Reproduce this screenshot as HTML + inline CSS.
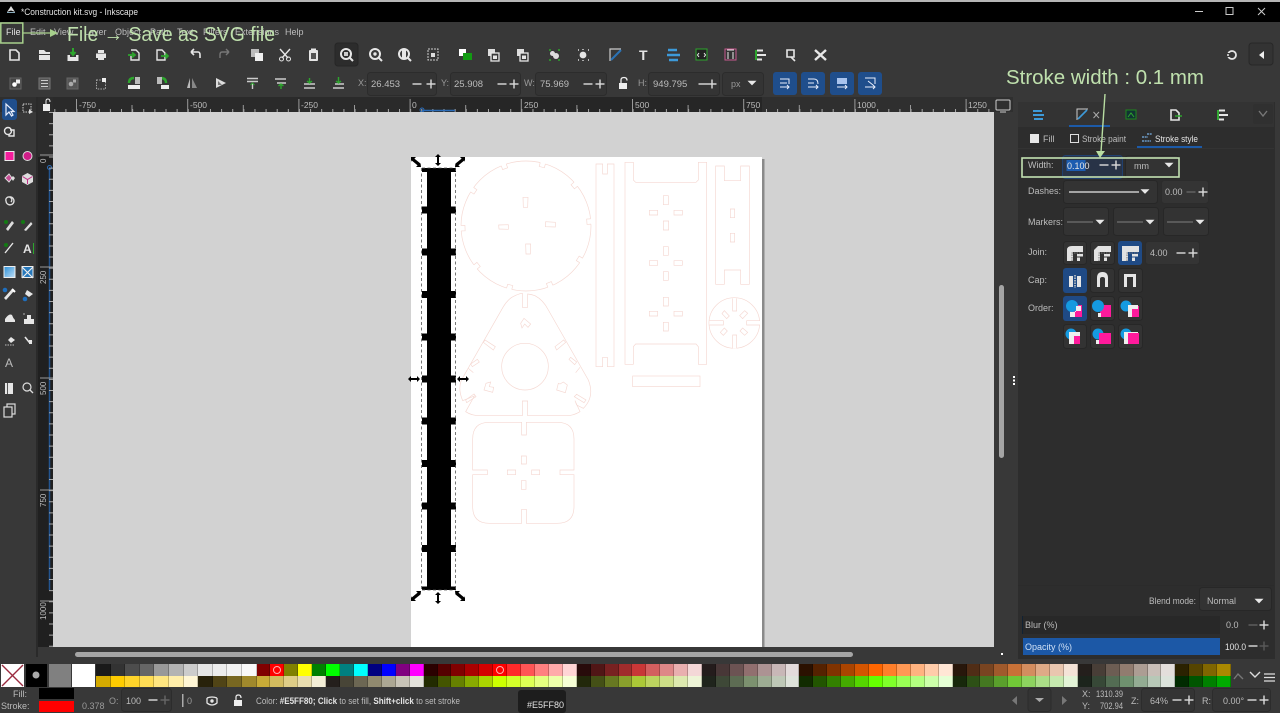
<!DOCTYPE html>
<html><head><meta charset="utf-8"><title>Inkscape</title>
<style>
html,body{margin:0;padding:0;background:#383838;width:1280px;height:713px;overflow:hidden}
svg{position:absolute;left:0;top:0;display:block}
text{font-family:"Liberation Sans",sans-serif;font-size:9px;fill:#bcbcbc}
.w{fill:#e4e4e4}.d{fill:#9a9a9a}
.fld{fill:#343434;stroke:#2c2c2c}
.btn{fill:#333;stroke:#272727}
.ic{fill:none;stroke:#e6e6e6;stroke-width:1.4}
.cut{fill:none;stroke:#f5d8d2;stroke-width:2}
.ann{font-family:"Liberation Sans",sans-serif;fill:#bfe0ad;font-size:20px}
#pal{position:absolute;left:96px;top:664px;width:1140px}
.row{display:flex;height:11.7px;margin-bottom:.2px}
.row i{display:block;flex:0 0 13.93px;height:11.5px;box-shadow:inset -1px 0 rgba(0,0,0,.22)}
.row i.g{flex:0 0 14.6px}
</style></head><body>
<svg width="1280" height="713" viewBox="0 0 1280 713" xmlns="http://www.w3.org/2000/svg">
<defs>
<g id="m"><rect x="-4.5" y="-.7" width="9" height="1.4" fill="#dcdcdc"/></g>
<g id="p"><rect x="-4.5" y="-.7" width="9" height="1.4" fill="#dcdcdc"/><rect x="-.7" y="-4.5" width="1.4" height="9" fill="#dcdcdc"/></g>
<path id="tri" d="M-4.5-2.2H4.5L0 2.4Z" fill="#e8e8e8"/>
<path id="hh" d="M-6 0L-3-3V-1H3V-3L6 0L3 3V1H-3V3Z" fill="#000"/>
<path id="hv" d="M0-6L3-3H1V3H3L0 6L-3 3H-1V-3H-3Z" fill="#000"/>
<path id="hd" d="M-5-5H0L-1.6-3.4L4.6 1.6L5 5H0L1.6 3.4L-4.4-1.6L-5 0Z" fill="#000"/>
<g id="mag"><circle cx="-1" cy="-1" r="5" fill="none" stroke="#e6e6e6" stroke-width="2"/><path d="M2.5 2.5L6 6" stroke="#e6e6e6" stroke-width="2"/></g>
<g id="jin"><path d="M-3 8V0H8" fill="none" stroke="#777" stroke-width="1" stroke-dasharray="1.5 1"/><rect x="2" y="1" width="6" height="2.5" fill="#e2e2e2"/><rect x="2" y="4.5" width="3" height="3.5" fill="#e2e2e2"/></g>
<g id="n"><path d="M370 28H386V42H370Z" fill="#fff" stroke="none"/><path class="cut" d="M370 33V45H386V33"/></g>
</defs>

<!-- chrome -->
<rect width="1280" height="713" fill="#383838"/>
<rect width="1280" height="2" fill="#b5b5b5"/>
<rect y="2" width="1280" height="20" fill="#000"/>
<path d="M7 12L11 6L15 12L11 10.5Z" fill="#ddd"/><rect x="7" y="12" width="8" height="1" fill="#8ab"/>
<text x="21" y="15" class="w" textLength="117" lengthAdjust="spacingAndGlyphs">*Construction kit.svg - Inkscape</text>
<rect x="1195" y="11" width="8" height="1" fill="#ccc"/>
<rect x="1226" y="7.5" width="7" height="7" fill="none" stroke="#ccc"/>
<path d="M1258 8L1265 15M1265 8L1258 15" stroke="#ccc"/>

<!-- menu -->
<text x="6" y="35" class="w">File</text>
<text x="30" y="35">Edit</text><text x="54" y="35">View</text><text x="84" y="35">Layer</text><text x="115" y="35">Object</text><text x="150" y="35">Path</text><text x="177" y="35">Text</text><text x="203" y="35">Filters</text><text x="235" y="35">Extensions</text><text x="285" y="35">Help</text>

<!-- toolbar 1 -->
<g class="ic">
<path d="M10 50H16L19 53V60H10Z" stroke-width="1.6"/>
<path d="M39 50H44L46 52H50V60H39Z" fill="#e6e6e6" stroke="none"/><rect x="39" y="54" width="11" height="1" fill="#383838" stroke="none"/>
<path d="M73 48V54M70.5 52L73 55L75.5 52" stroke="#2da62d" stroke-width="2"/><path d="M67.5 55H70V57H76V55H78.5V61H67.5Z" fill="#e6e6e6" stroke="none"/>
<path d="M98 50H104V53H98ZM96 53.5H106V58H104V60H98V58H96Z" fill="#e6e6e6" stroke="none"/>
<path d="M131 50H136L139 53V60H131V56" /><path d="M128 55H134M132 52.5L135 55L132 57.5" stroke="#2da62d" stroke-width="1.7"/>
<path d="M157 60V50H162L165 53V60Z"/><path d="M161 56H168M165.5 53.5L168 56L165.5 58.5" stroke="#2da62d" stroke-width="1.7"/>
<path d="M191 52H198Q200 52 200 55V58M191 52L194 49M191 52L194 55" stroke-width="1.6"/>
<path d="M229 52H222Q220 52 220 55V58M229 52L226 49M229 52L226 55" stroke="#777" stroke-width="1.4"/>
</g>
<rect x="251" y="49" width="8" height="8" fill="#bbb"/><rect x="255" y="53" width="8" height="8" fill="#efefef"/>
<path d="M280 49L288 58M290 49L282 58" stroke="#e6e6e6" stroke-width="1.4"/><circle cx="281.5" cy="59" r="2" fill="none" stroke="#e6e6e6"/><circle cx="288.5" cy="59" r="2" fill="none" stroke="#e6e6e6"/>
<rect x="309" y="50" width="9" height="11" fill="#e6e6e6" rx="1"/><rect x="311" y="48.5" width="5" height="3" fill="#e6e6e6"/><rect x="311" y="53" width="5" height="6" fill="#555"/>
<rect x="335" y="43" width="23" height="23" rx="3" fill="#2c2c2c" stroke="#262626"/>
<use href="#mag" x="347" y="55"/><rect x="344" y="52" width="4" height="4" fill="#ccc"/>
<use href="#mag" x="376" y="55"/><circle cx="375" cy="54" r="1.7" fill="#e6e6e6"/>
<use href="#mag" x="405" y="55"/><rect x="402" y="50" width="4" height="8" fill="#e6e6e6"/>
<rect x="428" y="49" width="10" height="11" fill="none" stroke="#ccc" stroke-dasharray="2 1"/><rect x="431" y="53" width="4" height="4" fill="#ddd"/>
<rect x="459" y="49" width="7" height="7" fill="#fff"/><rect x="463" y="53" width="9" height="7" fill="#129a12"/>
<rect x="488" y="49" width="7" height="7" fill="#ddd"/><rect x="491" y="53" width="8" height="8" fill="#383838" stroke="#e6e6e6" stroke-width="1.3"/><rect x="493" y="55.5" width="4" height="3.5" fill="#e6e6e6"/>
<rect x="517" y="49" width="7" height="7" fill="#ddd"/><rect x="520" y="53" width="8" height="8" fill="#383838" stroke="#e6e6e6" stroke-width="1.3"/><rect x="522" y="55.5" width="4" height="3.5" fill="#e6e6e6"/>
<rect x="550" y="51" width="5" height="5" rx="2.5" fill="#ddd"/><circle cx="556" cy="56" r="3" fill="#ddd"/><path d="M549 50h2M558 50h2M549 60h2M558 60h2" stroke="#2da62d" stroke-width="1.5"/>
<circle cx="583" cy="55" r="3.4" fill="#e6e6e6"/><path d="M578 50h1M588 50h1M578 60h1M588 60h1M583 49v1M583 60v1" stroke="#ddd" stroke-width="1.4"/>
<path d="M610 61V49H621" fill="none" stroke="#ccc" stroke-width="1.2"/><path d="M611 60L621 50" stroke="#2b73b5" stroke-width="2"/>
<text x="639" y="60" style="font-size:14px;font-weight:bold" class="w">T</text>
<path d="M668 50H677M667 55H680M669 60H678" stroke="#3d9ad9" stroke-width="2.4"/>
<rect x="696" y="49" width="11" height="11" fill="#222" stroke="#2da62d"/><path d="M699 53L697.5 55L699 57M704 53L705.5 55L704 57" stroke="#eee" fill="none"/>
<rect x="725" y="49" width="11" height="11" fill="#333" stroke="#c85a90"/><path d="M727 50h7M728 52v7M733 52v7" stroke="#eee" fill="none"/>
<rect x="755" y="50" width="2" height="10" fill="#2da62d"/><path d="M757 50.5h6M757 55h9M757 59.5h5" stroke="#e6e6e6" stroke-width="2"/>
<path d="M787 50H794V57H787Z" fill="none" stroke="#e6e6e6" stroke-width="1.6"/><path d="M791 57L795 61" stroke="#e6e6e6" stroke-width="1.6"/>
<path d="M815 50L826 60M826 50L815 60" stroke="#e6e6e6" stroke-width="2.4"/>
<circle cx="1232" cy="55" r="4" fill="none" stroke="#e6e6e6" stroke-width="1.8"/><rect x="1226" y="53" width="4" height="4" fill="#383838"/><circle cx="1228" cy="55" r="1" fill="#e6e6e6"/>
<rect x="1249" y="43" width="24" height="22" rx="3" fill="#333" stroke="#272727"/><path d="M1264 51V59L1259 55Z" fill="#eee"/>

<!-- toolbar 2 -->
<rect x="10" y="78" width="11" height="11" fill="#444" stroke="#666"/><circle cx="14.5" cy="84.5" r="2.3" fill="#fff"/><rect x="16" y="79.5" width="4" height="4" fill="#eee"/>
<rect x="39" y="78" width="11" height="11" fill="#555" stroke="#777"/><path d="M41 80.5h7M41 83.5h7M41 86.5h7" stroke="#ccc"/>
<rect x="67" y="78" width="11" height="11" fill="#555" stroke="#666"/><circle cx="71" cy="84" r="2.3" fill="#aaa"/><rect x="73" y="79.5" width="3" height="3" fill="#aaa"/>
<rect x="96.5" y="80" width="9" height="9" fill="none" stroke="#aaa" stroke-dasharray="1.5 1.2"/><rect x="102" y="78" width="4" height="4" fill="#eee"/>
<path d="M129 83Q129 78 134 78" fill="none" stroke="#2da62d" stroke-width="2.4"/><rect x="135" y="77" width="5" height="7" fill="#bbb"/><rect x="128" y="85" width="12" height="4" fill="#eee"/>
<path d="M166 83Q166 78 161 78" fill="none" stroke="#2da62d" stroke-width="2.4"/><rect x="157" y="77" width="5" height="7" fill="#bbb"/><rect x="161" y="85" width="8" height="4" fill="#eee"/>
<path d="M187 88H190V78Z" fill="#bbb"/><path d="M192 78V88H197Z" fill="#888"/>
<path d="M216 78V88L226 83Z" fill="#ddd"/><path d="M218 81V85H222Z" fill="#777"/>
<path d="M247 78.5h11M247 81.5h11M252.5 83v6" stroke="#ccc" stroke-width="1.4"/><path d="M250.5 85L252.5 83L254.5 85" stroke="#2da62d" fill="none"/>
<path d="M275 79h11M277 83h9" stroke="#ccc" stroke-width="1.4"/><path d="M281 89V84M278.5 86L281 84L283.5 86" stroke="#2da62d" fill="none" stroke-width="1.4"/>
<path d="M304 84h11M304 88h11" stroke="#ccc" stroke-width="1.4"/><path d="M309.5 78V83M307 81L309.5 83L312 81" stroke="#2da62d" fill="none" stroke-width="1.4"/>
<path d="M333 88h11M335 84h9" stroke="#ccc" stroke-width="1.4"/><path d="M338.5 77V83M336 81L338.5 83L341 81" stroke="#2da62d" fill="none" stroke-width="1.4"/>

<text x="358" y="86" class="d">X:</text><rect x="367.5" y="72.5" width="69" height="23" rx="3" class="fld"/><text x="371" y="87" style="font-size:9.5px" fill="#bbb">26.453</text><use href="#m" x="417" y="84"/><use href="#p" x="431" y="84"/>
<text x="441" y="86" class="d">Y:</text><rect x="450.5" y="72.5" width="70" height="23" rx="3" class="fld"/><text x="454" y="87" style="font-size:9.5px">25.908</text><use href="#m" x="502" y="84"/><use href="#p" x="514" y="84"/>
<text x="524" y="86" class="d">W:</text><rect x="535.5" y="72.5" width="71" height="23" rx="3" class="fld"/><text x="540" y="87" style="font-size:9.5px">75.969</text><use href="#m" x="588" y="84"/><use href="#p" x="600" y="84"/>
<rect x="619" y="83" width="8" height="6" fill="#eee"/><path d="M621 83V80Q621 77.500 624 77.500Q627 77.500 627 80.500" fill="none" stroke="#eee" stroke-width="1.300"/>
<text x="638" y="86" class="d">H:</text><rect x="648.5" y="72.5" width="71" height="23" rx="3" class="fld"/><text x="653" y="87" style="font-size:9.5px">949.795</text><use href="#m" x="703" y="84"/><use href="#p" x="712" y="84"/>
<rect x="722.5" y="72.5" width="41" height="23" rx="3" class="fld"/><text x="731" y="87" class="d">px</text><use href="#tri" x="752" y="83"/>
<g fill="#1f4e8c"><rect x="773" y="72" width="24" height="23" rx="3"/><rect x="801" y="72" width="24" height="23" rx="3"/><rect x="830" y="72" width="24" height="23" rx="3"/><rect x="858" y="72" width="24" height="23" rx="3"/></g>
<path d="M780 79h9v5M780 83h7M780 87h9M787 85l2 2-2 2" stroke="#e8eefc" fill="none"/>
<path d="M808 79h6q4 0 4 5M808 83h6M808 87h10M816 85l2 2-2 2" stroke="#e8eefc" fill="none"/>
<rect x="837" y="78" width="10" height="6" fill="#a9c4ee"/><path d="M837 87h10M845 85l2 2-2 2" stroke="#e8eefc" fill="none"/>
<path d="M865 78h10v6M868 81l5 4M865 87h10M873 85l2 2-2 2" stroke="#e8eefc" fill="none"/>

<!-- rulers -->
<rect x="0" y="97" width="1013" height="15" fill="#2f2f2f"/>
<rect x="53" y="97" width="360" height="15" fill="#2a2a2a"/><rect x="411" y="97" width="351" height="15" fill="#262626"/>
<rect x="36" y="97" width="17" height="550" fill="#2c2c2c"/><rect x="38" y="157" width="15" height="490" fill="#202020"/>
<line x1="53" x2="994" y1="110.5" y2="110.5" stroke="#a8a8a8" stroke-width="3" stroke-dasharray="1 10.12" stroke-dashoffset="-1.3"/>
<g stroke="#9a9a9a"><path d="M76.5 99V112M187.7 99V112M298.9 99V112M410.1 99V112M521.3 99V112M632.5 99V112M743.7 99V112M854.9 99V112M966.1 99V112"/><path d="M132 105V112M243.3 105V112M354.5 105V112M465.7 105V112M576.9 105V112M688.1 105V112M799.3 105V112M910.5 105V112"/></g>
<g><text x="79" y="108" style="font-size:8.5px">-750</text><text x="190" y="108" style="font-size:8.5px">-500</text><text x="301" y="108" style="font-size:8.5px">-250</text><text x="412" y="108" style="font-size:8.5px">0</text><text x="524" y="108" style="font-size:8.5px">250</text><text x="635" y="108" style="font-size:8.5px">500</text><text x="746" y="108" style="font-size:8.5px">750</text><text x="857" y="108" style="font-size:8.5px">1000</text><text x="968" y="108" style="font-size:8.5px">1250</text></g>
<path d="M422 110.5H455" stroke="#2b6cb8" stroke-width="1.5"/><circle cx="422" cy="110" r="2" fill="none" stroke="#2b6cb8"/>
<path d="M49.5 168V590" stroke="#23548f" stroke-width="1.5"/><circle cx="49.5" cy="167.500" r="2" fill="none" stroke="#2b6cb8"/>
<line x1="51" x2="51" y1="112" y2="647" stroke="#a8a8a8" stroke-width="4" stroke-dasharray="1 10.12"/>
<g stroke="#9a9a9a"><path d="M40 155H53M40 267H53M40 378H53M40 490H53M40 601H53"/></g>
<text transform="translate(46,284) rotate(-90)" style="font-size:8px">250</text><text transform="translate(46,395) rotate(-90)" style="font-size:8px">500</text><text transform="translate(46,507) rotate(-90)" style="font-size:8px">750</text><text transform="translate(46,620) rotate(-90)" style="font-size:8px">1000</text><text transform="translate(46,163) rotate(-90)" style="font-size:8px">0</text>
<rect x="43" y="104" width="7" height="7" fill="#eee"/><path d="M46 104V101Q46 99 48 99Q50 99 50 102" fill="none" stroke="#eee"/>

<!-- left toolbar -->
<rect x="2" y="99" width="15" height="21" rx="3" fill="#1f4e8c"/>
<path d="M6 104V115L9 112L11.5 116L13 115L11 111.500H14Z" fill="none" stroke="#e8eefc" stroke-width="1.2"/>
<rect x="23" y="104" width="8" height="8" fill="none" stroke="#ccc" stroke-dasharray="1.5 1"/><path d="M29 109L33 112L29 114Z" fill="#ddd"/>
<circle cx="8" cy="131" r="3.5" fill="none" stroke="#e6e6e6" stroke-width="1.4"/><path d="M10 130H14V136H9V134" fill="none" stroke="#e6e6e6" stroke-width="1.4"/>
<rect x="5" y="151.500" width="9" height="9" fill="#f51d9c" stroke="#eee"/>
<circle cx="27.500" cy="156" r="4.500" fill="#d01e88" stroke="#ddd"/>
<path d="M5 178L9 174L12 178L9 182Z" fill="#c64d94" stroke="#ddd"/><path d="M11 178l2-2 2 2-2 3Z" fill="#ddd"/>
<path d="M27.500 173L33 176V182L27.500 185L22 182V176Z" fill="#ddd"/><path d="M22.500 176.500L27.500 179.500L32.500 176.500M27.500 179.500V184" stroke="#c02d85" fill="none"/>
<path d="M9 197a4 4 0 1 1-3 4a3 3 0 1 1 5 1" fill="none" stroke="#ddd" stroke-width="1.4"/>
<circle cx="6" cy="222" r="2" fill="#137a13"/><path d="M6 229L12 221L14 223L8 231Z" fill="#ddd"/><circle cx="23" cy="222" r="2" fill="#137a13"/><path d="M24 230L31 222L32.500 224L26 231Z" fill="#ddd"/>
<path d="M5 253L13 243" stroke="#e6e6e6" stroke-width="1.4"/><circle cx="6" cy="245" r="2" fill="#137a13"/>
<text x="23" y="253" style="font-size:12px;font-weight:bold" class="w">A</text><rect x="33" y="243" width="1" height="11" fill="#2da62d"/>
<defs><linearGradient id="gg" x1="0" y1="0" x2="1" y2="1"><stop offset="0" stop-color="#2b8fd6"/><stop offset="1" stop-color="#c0e0f8"/></linearGradient></defs>
<rect x="4" y="266.500" width="11" height="11" fill="url(#gg)" stroke="#eee"/>
<rect x="22" y="266.500" width="11" height="11" fill="#2678bb" stroke="#eee"/><path d="M22 267L33 278M33 267L22 278" stroke="#eee" stroke-width="1.2"/>
<circle cx="5" cy="290" r="2.300" fill="#1f6fbe"/><path d="M6 300L14 291L12 289L4 298Z" fill="#e6e6e6"/><path d="M12 289L15 292" stroke="#fff" stroke-width="2"/>
<circle cx="25" cy="299" r="2.300" fill="#1f6fbe"/><path d="M27 290L33 294L29 297L25 294Z" fill="#e6e6e6"/>
<path d="M5 322V319Q9 313 12 315Q13 318 15 320V322Z" fill="#e6e6e6"/>
<rect x="24" y="319" width="10" height="5" fill="#e6e6e6"/><rect x="27" y="315" width="4" height="4" fill="#e6e6e6"/><circle cx="24" cy="314" r="1" fill="#888"/>
<path d="M11 337L15 340L11 343L8 340Z" fill="#e6e6e6"/><path d="M5 345h10" stroke="#bbb" stroke-dasharray="1.500 1"/>
<path d="M25 337L29 342L32 341" fill="none" stroke="#e6e6e6" stroke-width="1.6"/><rect x="29" y="340" width="3" height="4" fill="#e6e6e6"/>
<text x="5" y="367" style="font-size:12px" fill="#ccc">A</text>
<rect x="5" y="383" width="8" height="11" fill="#e6e6e6"/><path d="M7.500 383V394" stroke="#555"/>
<circle cx="27" cy="387" r="4" fill="none" stroke="#ddd" stroke-width="1.2"/><path d="M30 390L33 393" stroke="#ddd" stroke-width="1.300"/>
<rect x="7" y="404" width="8" height="10" fill="none" stroke="#ddd" stroke-width="1.200"/><rect x="4" y="407" width="8" height="10" fill="#383838" stroke="#ddd" stroke-width="1.200"/>
<rect x="36" y="97" width="2" height="560" fill="#2a2a2a"/>

<!-- canvas -->
<rect x="53" y="112" width="941" height="535" fill="#d2d2d2"/>
<rect x="762" y="159" width="2.500" height="488" fill="#8a8a8a"/>
<rect x="411" y="157" width="351" height="490" fill="#fff"/>

<g transform="translate(400,150) scale(.33333)">
<circle class="cut" cx="378" cy="228" r="195"/>
<use href="#n" transform="rotate(15 378 228)"/><use href="#n" transform="rotate(50 378 228)"/><use href="#n" transform="rotate(86 378 228)"/><use href="#n" transform="rotate(122 378 228)"/><use href="#n" transform="rotate(158 378 228)"/><use href="#n" transform="rotate(195 378 228)"/><use href="#n" transform="rotate(231 378 228)"/><use href="#n" transform="rotate(268 378 228)"/><use href="#n" transform="rotate(304 378 228)"/><use href="#n" transform="rotate(340 378 228)"/>
<path class="cut" d="M369 142H384L383 172H370ZM296 225L325 224V238L297 237ZM437 215L466 217V231L436 230ZM377 282H392L391 312H378Z"/>
<path class="cut" d="M345 437Q360 430 367 430V472H383V432Q395 433 405 437Q430 450 445 480L565 690Q585 740 550 775L530 765L525 752L540 785Q520 797 500 797H383V753H367V797H240Q215 797 197 785L223 738L188 752Q170 710 190 680L310 470Q325 445 345 437Z"/>
<circle class="cut" cx="375" cy="650" r="70"/>
<path class="cut" d="M362 520L372 505L392 522L384 532L374 522L366 534Z"/>
<path class="cut" d="M258 700L252 720L278 727L281 712L268 710L272 696Z"/>
<path class="cut" d="M475 700L470 720L496 728L502 705L490 696L480 702Z"/>
<path class="cut" d="M250 577L255 570L286 590L280 600ZM497 577L491 570L465 590L470 600ZM232 628L238 636L217 650L212 642ZM507 628L512 622L530 636L524 644ZM205 655L220 668M540 652L527 668M197 750L222 732L228 740L200 758ZM523 740L530 733L558 750L552 758Z"/>
</g>
<g transform="translate(400,400) scale(.33333)">
<path class="cut" d="M268 67H365V105H379V67H472Q522 67 522 117V210H480V224H522V320Q522 370 472 370H379V328H365V370H268Q218 370 218 320V224H262V210H218V117Q218 67 268 67Z"/>
<path class="cut" d="M364 168H379V192H364ZM364 242H378V268H364ZM322 210H347V224H322ZM395 210H419V224H395Z"/>
</g>
<g transform="translate(590,150) scale(.33333)">
<path class="cut" d="M18 42H38V72H52V42H72V650H52V622H38V650H18Z"/>
<path class="cut" d="M105 37H130V90L137 97H318L325 90V37H350V643H325V590L318 582H137L130 590V643H105Z"/>
<path class="cut" d="M220 137H235V164H220ZM220 213H236V240H220ZM178 181H203V195H178ZM252 181H277V195H252ZM220 290H235V316H220ZM220 365H235V391H220ZM178 332H203V346H178ZM252 332H277V346H252ZM220 442H235V468H220ZM220 517H235V543H220ZM178 484H203V498H178ZM252 484H277V498H252Z"/>
<path class="cut" d="M377 48H403V92H452V48H478V403H452V360H403V403H377Z"/>
<path class="cut" d="M421 177H434V203H421ZM421 250H434V276H421Z"/>
<circle class="cut" cx="433" cy="519" r="76"/>
<path d="M428 445V483H440V445M428 595V555H440V595M358 512H400V525H358M510 512H470V525H510" style="fill:#fff;stroke:#f5d8d2;stroke-width:2"/>
<path class="cut" d="M403 482L418 498L410 506L396 491ZM464 482L473 490L458 506L449 497ZM403 534L412 543L400 556L391 547ZM458 534L473 547L464 556L450 543Z"/>
<rect class="cut" x="128" y="678" width="202" height="32"/>
</g>

<!-- selected object -->
<g fill="#000">
<rect x="427" y="168" width="24" height="422"/>
<rect x="422" y="168" width="34" height="4"/><rect x="422" y="206.500" width="34" height="7"/><rect x="422" y="248.500" width="34" height="7"/><rect x="422" y="291" width="34" height="7"/><rect x="422" y="333.500" width="34" height="7"/><rect x="422" y="375.500" width="34" height="7"/><rect x="422" y="417.500" width="34" height="7"/><rect x="422" y="460" width="34" height="7"/><rect x="422" y="502.500" width="34" height="7"/><rect x="422" y="545" width="34" height="7"/><rect x="422" y="586.500" width="34" height="3.500"/>
</g>
<path d="M421.500 168V590M455.500 168V590M422 168H456M422 590H456" stroke="#555" stroke-width=".8" stroke-dasharray="3 2.500" fill="none"/>
<use href="#hd" x="416" y="162"/><use href="#hv" x="438" y="160"/><use href="#hd" transform="translate(460,162) scale(-1,1)"/>
<use href="#hh" x="414" y="379"/><use href="#hh" x="463" y="379"/>
<use href="#hd" transform="translate(416,596) scale(1,-1)"/><use href="#hv" x="438" y="598"/><use href="#hd" transform="translate(460,596) scale(-1,-1)"/>

<!-- scrollbars -->
<rect x="75" y="652" width="778" height="5" rx="2.500" fill="#a5a5a5"/>
<rect x="999" y="285" width="5" height="173" rx="2.500" fill="#a5a5a5"/>
<rect x="996" y="100" width="14" height="10" rx="1" fill="none" stroke="#ccc"/><path d="M1000 112h6" stroke="#ccc"/>
<rect x="1001" y="653" width="2" height="2" fill="#fff"/>
<g fill="#fff"><rect x="1013" y="376" width="2" height="2"/><rect x="1013" y="379.500" width="2" height="2"/><rect x="1013" y="383" width="2" height="2"/></g>

<!-- right panel -->
<rect x="1018" y="102" width="257" height="557" fill="#2d2d2d"/>
<rect x="1018" y="102" width="256" height="25" fill="#333"/>
<path d="M1033 111H1042M1033 115H1044M1034 119H1043" stroke="#3d9ad9" stroke-width="2"/>
<path d="M1077 120V109H1088" fill="none" stroke="#ccc"/><path d="M1078 119L1087 110" stroke="#3d9ad9" stroke-width="1.600"/>
<path d="M1093.500 112L1099 118M1099 112L1093.500 118" stroke="#aaa"/>
<rect x="1069" y="125" width="41" height="2" fill="#1c5aa8"/>
<rect x="1126" y="110" width="10" height="9" fill="#133" stroke="#1e8a1e"/><path d="M1128 117L1131 113L1134 117" stroke="#2da62d" fill="none"/>
<path d="M1171 110H1176L1179 113V120H1171Z" fill="none" stroke="#e6e6e6" stroke-width="1.600"/><path d="M1175 116H1182" stroke="#2da62d" stroke-width="1.500"/>
<rect x="1217" y="110" width="2" height="10" fill="#3a3"/><path d="M1219 110.500h6M1219 115h9M1219 119.500h5" stroke="#e6e6e6" stroke-width="2"/>
<rect x="1253" y="104" width="20" height="20" rx="2" fill="#303030"/><path d="M1259 111L1263 116L1267 111" stroke="#777" fill="none" stroke-width="1.400"/>
<rect x="1030" y="134" width="9" height="9" fill="#e8e8e8"/><text x="1043" y="142">Fill</text>
<rect x="1070.500" y="134.500" width="8" height="8" fill="none" stroke="#ddd"/><text x="1082" y="142" textLength="44" lengthAdjust="spacingAndGlyphs">Stroke paint</text>
<path d="M1142 141h9M1142 137h6M1147 134h5" stroke="#7ab1e6" stroke-width="1.200" stroke-dasharray="2 .7"/><text x="1155" y="142" textLength="43" lengthAdjust="spacingAndGlyphs" class="w">Stroke style</text>
<rect x="1137" y="146" width="65" height="2" fill="#1c5aa8"/>
<rect x="1018" y="148" width="256" height="1" fill="#333"/>

<text x="1028" y="168">Width:</text>
<rect x="1062.500" y="155.500" width="60" height="23" rx="3" fill="#283347" stroke="#20406f"/>
<rect x="1066.500" y="160" width="19" height="11" fill="#1c5cb0"/><text x="1067" y="169" class="w">0.100</text>
<use href="#m" x="1104" y="165"/><use href="#p" x="1116" y="165"/>
<rect x="1125.500" y="155.500" width="53" height="23" rx="3" class="btn"/><text x="1134" y="169">mm</text><use href="#tri" x="1169" y="165"/>

<text x="1028" y="194">Dashes:</text>
<rect x="1063.500" y="180.500" width="94" height="23" rx="3" class="btn"/><path d="M1069 192H1139" stroke="#e8e8e8" stroke-width="1.200"/><use href="#tri" x="1145" y="191.500"/>
<rect x="1161.500" y="180.500" width="47" height="23" rx="3" class="fld"/><text x="1165" y="195">0.00</text><use href="#m" x="1191" y="192" opacity=".3"/><use href="#p" x="1203" y="192"/>

<text x="1028" y="225">Markers:</text>
<g class="btn"><rect x="1063.500" y="207.500" width="45" height="28" rx="3"/><rect x="1113.500" y="207.500" width="45" height="28" rx="3"/><rect x="1163.500" y="207.500" width="45" height="28" rx="3"/></g>
<path d="M1067 222H1093M1117 222H1143M1167 222H1193" stroke="#999" stroke-width=".8"/>
<use href="#tri" x="1100" y="222"/><use href="#tri" x="1150" y="222"/><use href="#tri" x="1200" y="222"/>

<text x="1028" y="255">Join:</text>
<rect x="1063.500" y="241.500" width="23" height="23" rx="3" class="btn"/><rect x="1090.500" y="241.500" width="24" height="23" rx="3" class="btn"/><rect x="1118" y="241" width="24" height="24" rx="3" fill="#1f4a85"/>
<path d="M1067 261V250Q1067 246 1072 246H1083V252H1073V261Z" fill="#e2e2e2"/><use href="#jin" x="1075" y="253"/>
<path d="M1094 261V250L1098 246H1111V252H1100V261Z" fill="#e2e2e2"/><use href="#jin" x="1102" y="253"/>
<path d="M1122 261V246H1139V252H1128V261Z" fill="#e2e2e2"/><use href="#jin" x="1130" y="253"/>
<rect x="1145.500" y="241.500" width="54" height="23" rx="3" class="fld"/><text x="1150" y="256">4.00</text><use href="#m" x="1181" y="253"/><use href="#p" x="1193" y="253"/>

<text x="1028" y="283">Cap:</text>
<rect x="1063" y="268" width="24" height="25" rx="3" fill="#1f4a85"/><rect x="1090.500" y="268.500" width="24" height="24" rx="3" class="btn"/><rect x="1118.500" y="268.500" width="24" height="24" rx="3" class="btn"/>
<path d="M1069 276H1073V287H1069ZM1077 276H1081V287H1077Z" fill="#e6e6e6"/><path d="M1075 275V288" stroke="#ccc" stroke-width="1.500" stroke-dasharray="1.500 1"/>
<path d="M1097 287V278Q1097 272 1102.500 272Q1108 272 1108 278V287H1105V279Q1105 277 1102.500 277Q1100 277 1100 279V287Z" fill="#e6e6e6"/>
<path d="M1124 287V274H1136V287H1133V277H1127V287Z" fill="#e6e6e6"/>

<text x="1028" y="311">Order:</text>
<rect x="1063" y="296" width="24" height="25" rx="3" fill="#1f4a85"/>
<rect x="1090.500" y="296.500" width="24" height="24" rx="3" class="btn"/><rect x="1118.500" y="296.500" width="24" height="24" rx="3" class="btn"/>
<rect x="1063.500" y="324.500" width="23" height="24" rx="3" class="btn"/><rect x="1090.500" y="324.500" width="24" height="24" rx="3" class="btn"/><rect x="1118.500" y="324.500" width="24" height="24" rx="3" class="btn"/>
<rect x="1070" y="305" width="12" height="12" fill="#ff1a9c"/><circle cx="1072" cy="306" r="6" fill="#159ae0"/><path d="M1070 312H1076V306H1081V311H1075V317H1070Z" fill="#eee"/>
<rect x="1100" y="305" width="11" height="12" fill="#ff1a9c"/><circle cx="1098" cy="306" r="6" fill="#159ae0"/><path d="M1098 313H1101V317H1098Z" fill="#eee"/>
<rect x="1128" y="306" width="11" height="11" fill="#ff1a9c"/><circle cx="1126" cy="306" r="5.500" fill="#159ae0"/><path d="M1128 305H1138V309H1132V317H1128Z" fill="#eee"/>
<circle cx="1071" cy="334" r="5.500" fill="#159ae0"/><path d="M1069 332H1080V344H1069Z" fill="#eee"/><rect x="1074" y="336" width="6" height="8" fill="#ff1a9c"/>
<circle cx="1098" cy="334" r="5.500" fill="#159ae0"/><rect x="1099" y="333" width="12" height="11" fill="#ff1a9c"/><path d="M1096 340H1099V344H1096Z" fill="#eee"/>
<circle cx="1126" cy="334" r="5.500" fill="#159ae0"/><path d="M1124 332H1138V344H1124Z" fill="#eee"/><rect x="1128" y="333" width="11" height="11" fill="#ff1a9c"/>

<rect x="1018" y="585" width="256" height="1" fill="#2b2b2b"/>
<text x="1149" y="604" textLength="47" lengthAdjust="spacingAndGlyphs">Blend mode:</text>
<rect x="1199.500" y="587.500" width="72" height="23" rx="3" class="btn"/><text x="1207" y="604">Normal</text><use href="#tri" x="1259" y="601"/>
<rect x="1022" y="616" width="198" height="18" fill="#282828"/><rect x="1022" y="616" width="1" height="18" fill="#123"/><text x="1025" y="628">Blur (%)</text>
<text x="1226" y="628">0.0</text><use href="#m" x="1253" y="625" opacity=".3"/><use href="#p" x="1264" y="625"/>
<rect x="1023" y="638" width="197" height="17" fill="#1c58a6"/><text x="1025" y="650" style="fill:#cfe0f5">Opacity (%)</text>
<text x="1225" y="650" class="w" textLength="21" lengthAdjust="spacingAndGlyphs">100.0</text><use href="#m" x="1253" y="646"/><use href="#p" x="1264" y="646" opacity=".25"/>

<!-- palette fixed swatches -->
<rect y="660" width="1280" height="53" fill="#383838"/>
<rect x="1" y="664" width="23" height="23" fill="#fff"/><path d="M2 665L23 686M23 665L2 686" stroke="#9a2b3f" stroke-width="1.400"/>
<rect x="26" y="664" width="21" height="23" fill="#000"/><circle cx="36" cy="675" r="3.500" fill="#aaa"/>
<rect x="49" y="664" width="22" height="23" fill="#808080"/>
<rect x="72" y="664" width="23" height="23" fill="#fff"/>
<path d="M1234 679L1238 674L1243 679" stroke="#777" fill="none" stroke-width="1.400"/>
<path d="M1250 672L1255 677L1260 672" stroke="#ddd" fill="none" stroke-width="1.400"/>
<path d="M1264 674H1275M1264 677.500H1275M1264 681H1275" stroke="#ddd" stroke-width="1.200"/>

<!-- status -->
<text x="13" y="697">Fill:</text><text x="1" y="709">Stroke:</text>
<rect x="39" y="688" width="35" height="11" fill="#000"/><rect x="39" y="701" width="35" height="11" fill="#f00"/>
<text x="82" y="709" class="d">0.378</text>
<text x="109" y="704" class="d">O:</text><rect x="121.500" y="688.500" width="50" height="23" rx="3" class="fld"/><text x="126" y="704">100</text><use href="#m" x="153" y="700"/><use href="#p" x="165" y="700" opacity=".3"/>
<rect x="182" y="694" width="1.500" height="13" fill="#aaa"/><text x="187" y="704" class="d">0</text>
<path d="M207 698Q212 696 217 698M207 698V703Q212 707 217 703V698" fill="none" stroke="#e6e6e6" stroke-width="1.300"/><circle cx="212" cy="701" r="1.700" fill="#e6e6e6"/>
<rect x="234" y="700" width="8" height="6" fill="#eee"/><path d="M236 700V697Q236 695 238.500 695Q241 695 241 698" fill="none" stroke="#eee" stroke-width="1.200"/>
<text x="256" y="704" textLength="204" lengthAdjust="spacingAndGlyphs">Color: <tspan style="font-weight:bold" class="w">#E5FF80;</tspan> <tspan style="font-weight:bold" class="w">Click</tspan> to set fill, <tspan style="font-weight:bold" class="w">Shift+click</tspan> to set stroke</text>
<rect x="518" y="690" width="48" height="23" rx="3" fill="#1d1d1d"/><text x="527" y="708" class="w">#E5FF80</text>
<path d="M1017 696V705L1012 700.500Z" fill="#777"/><path d="M1062 696V705L1067 700.500Z" fill="#777"/>
<rect x="1028" y="688.500" width="23" height="23" rx="3" class="fld"/><path d="M1035 698H1044L1039.500 702Z" fill="#aaa"/>
<text x="1082" y="697">X:</text><text x="1096" y="697" textLength="27" lengthAdjust="spacingAndGlyphs">1310.39</text><text x="1082" y="709">Y:</text><text x="1100" y="709" textLength="23" lengthAdjust="spacingAndGlyphs">702.94</text>
<text x="1131" y="704">Z:</text><rect x="1141.500" y="688.500" width="53" height="23" rx="3" class="fld"/><text x="1150" y="704">64%</text><use href="#m" x="1177" y="700"/><use href="#p" x="1189" y="700"/>
<text x="1202" y="704">R:</text><rect x="1212.500" y="688.500" width="58" height="23" rx="3" class="fld"/><text x="1223" y="704">0.00°</text><use href="#m" x="1252" y="700"/><use href="#p" x="1264" y="700"/>

<!-- annotations -->
<rect x=".8" y="23" width="22" height="20" fill="none" stroke="#a7d08c" stroke-width="1.500"/>
<path d="M23 33H55" stroke="#a7d08c" stroke-width="1.300"/><path d="M50 29L58 33L50 37Z" fill="#a7d08c"/>
<text x="67" y="41" class="ann" textLength="208" lengthAdjust="spacingAndGlyphs">File → Save as SVG file</text>
<text x="1006" y="84" class="ann" textLength="198" lengthAdjust="spacingAndGlyphs">Stroke width : 0.1 mm</text>
<path d="M1105 94L1101 152" stroke="#b8dda2" stroke-width="1.400"/><path d="M1096 151H1105L1100 158Z" fill="#b8dda2"/>
<rect x="1022" y="158" width="157" height="19" fill="none" stroke="#c3e2b2" stroke-width="1.600"/>
</svg>

<div id="pal">
<div class="row"><i class="g" style="background:#1a1a1a"></i><i class="g" style="background:#333"></i><i class="g" style="background:#4d4d4d"></i><i class="g" style="background:#666"></i><i class="g" style="background:#999"></i><i class="g" style="background:#b3b3b3"></i><i class="g" style="background:#ccc"></i><i class="g" style="background:#e6e6e6"></i><i class="g" style="background:#ececec"></i><i class="g" style="background:#f2f2f2"></i><i class="g" style="background:#f9f9f9"></i><i style="background:#800000"></i><i style="background:#f00"></i><i style="background:#808000"></i><i style="background:#ff0"></i><i style="background:#008000"></i><i style="background:#0f0"></i><i style="background:#008080"></i><i style="background:#0ff"></i><i style="background:#000080"></i><i style="background:#00f"></i><i style="background:#800080"></i><i style="background:#f0f"></i><i style="background:#2b0000"></i><i style="background:#500"></i><i style="background:#800000"></i><i style="background:#a00"></i><i style="background:#d40000"></i><i style="background:#f00"></i><i style="background:#ff2a2a"></i><i style="background:#f55"></i><i style="background:#ff8080"></i><i style="background:#faa"></i><i style="background:#ffd5d5"></i><i style="background:#280b0b"></i><i style="background:#501616"></i><i style="background:#782121"></i><i style="background:#a02c2c"></i><i style="background:#c83737"></i><i style="background:#d35f5f"></i><i style="background:#de8787"></i><i style="background:#e9afaf"></i><i style="background:#f4d7d7"></i><i style="background:#241c1c"></i><i style="background:#483737"></i><i style="background:#6c5353"></i><i style="background:#916f6f"></i><i style="background:#ac9393"></i><i style="background:#c8b7b7"></i><i style="background:#e3dbdb"></i><i style="background:#2b1100"></i><i style="background:#520"></i><i style="background:#803300"></i><i style="background:#a40"></i><i style="background:#d45500"></i><i style="background:#f60"></i><i style="background:#ff7f2a"></i><i style="background:#f95"></i><i style="background:#ffb380"></i><i style="background:#fca"></i><i style="background:#ffe6d5"></i><i style="background:#28170b"></i><i style="background:#502d16"></i><i style="background:#784421"></i><i style="background:#a05a2c"></i><i style="background:#c87137"></i><i style="background:#d38d5f"></i><i style="background:#deaa87"></i><i style="background:#e9c6af"></i><i style="background:#f4e3d7"></i><i style="background:#241f1c"></i><i style="background:#483e37"></i><i style="background:#6c5d53"></i><i style="background:#917c6f"></i><i style="background:#ac9d93"></i><i style="background:#c8beb7"></i><i style="background:#e3dedb"></i><i style="background:#2b2200"></i><i style="background:#540"></i><i style="background:#806600"></i><i style="background:#a80"></i></div>
<div class="row"><i style="flex-basis:14.6px;background:#d4aa00"></i><i style="flex-basis:14.6px;background:#fc0"></i><i style="flex-basis:14.6px;background:#ffd42a"></i><i style="flex-basis:14.6px;background:#fd5"></i><i style="flex-basis:14.6px;background:#ffe680"></i><i style="flex-basis:14.6px;background:#fea"></i><i style="flex-basis:14.6px;background:#fff6d5"></i><i style="flex-basis:14.6px;background:#28220b"></i><i style="flex-basis:14.6px;background:#504416"></i><i style="flex-basis:14.6px;background:#786721"></i><i style="flex-basis:14.6px;background:#a0892c"></i><i style="background:#c8ab37"></i><i style="background:#d3bc5f"></i><i style="background:#decd87"></i><i style="background:#e9ddaf"></i><i style="background:#f4eed7"></i><i style="background:#241f1c"></i><i style="background:#484537"></i><i style="background:#6c6753"></i><i style="background:#918a6f"></i><i style="background:#aca793"></i><i style="background:#c8c4b7"></i><i style="background:#e3e2db"></i><i style="background:#222b00"></i><i style="background:#450"></i><i style="background:#668000"></i><i style="background:#8a0"></i><i style="background:#aad400"></i><i style="background:#cf0"></i><i style="background:#d4ff2a"></i><i style="background:#df5"></i><i style="background:#e5ff80"></i><i style="background:#efa"></i><i style="background:#f6ffd5"></i><i style="background:#22280b"></i><i style="background:#445016"></i><i style="background:#677821"></i><i style="background:#89a02c"></i><i style="background:#abc837"></i><i style="background:#bcd35f"></i><i style="background:#cdde87"></i><i style="background:#dde9af"></i><i style="background:#eef4d7"></i><i style="background:#1f241c"></i><i style="background:#3e4837"></i><i style="background:#5d6c53"></i><i style="background:#7c916f"></i><i style="background:#9dac93"></i><i style="background:#bec8b7"></i><i style="background:#dee3db"></i><i style="background:#112b00"></i><i style="background:#250"></i><i style="background:#338000"></i><i style="background:#4a0"></i><i style="background:#55d400"></i><i style="background:#6f0"></i><i style="background:#7fff2a"></i><i style="background:#9f5"></i><i style="background:#b3ff80"></i><i style="background:#cfa"></i><i style="background:#e5ffd5"></i><i style="background:#17280b"></i><i style="background:#2d5016"></i><i style="background:#447821"></i><i style="background:#5aa02c"></i><i style="background:#71c837"></i><i style="background:#8dd35f"></i><i style="background:#aade87"></i><i style="background:#c6e9af"></i><i style="background:#e3f4d7"></i><i style="background:#1c241c"></i><i style="background:#374837"></i><i style="background:#536c53"></i><i style="background:#6f916f"></i><i style="background:#93ac93"></i><i style="background:#b7c8b7"></i><i style="background:#dbe3db"></i><i style="background:#002b00"></i><i style="background:#050"></i><i style="background:#008000"></i><i style="background:#0a0"></i></div>
</div>
<svg width="1280" height="713" style="pointer-events:none"><circle cx="277" cy="670" r="3.500" fill="none" stroke="#ffb0b0" stroke-width="1"/><circle cx="500" cy="670" r="3.500" fill="none" stroke="#ffb0b0" stroke-width="1"/></svg>
</body></html>
